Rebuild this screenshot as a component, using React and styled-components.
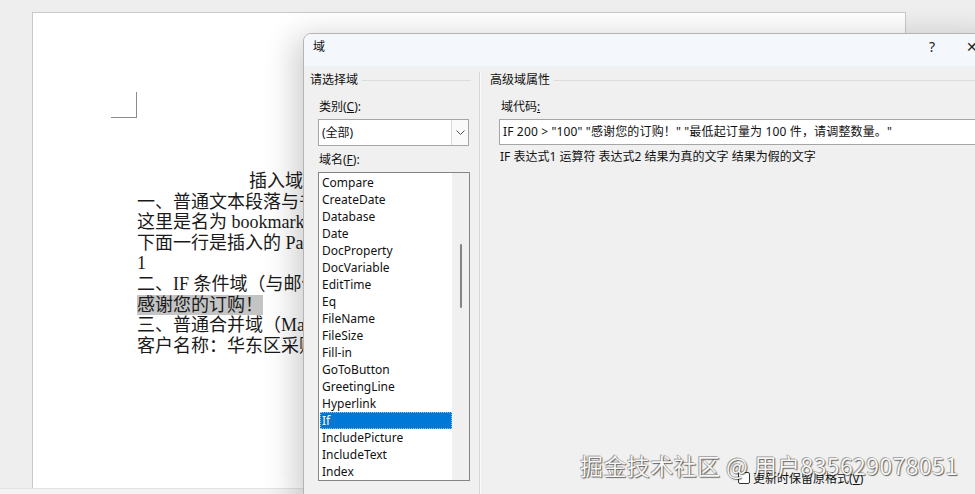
import React from 'react';
import styled, { createGlobalStyle } from 'styled-components';

const GlobalStyle = createGlobalStyle`
    html, body {
        margin: 0;
        padding: 0;
        background: #eeeeee;
        overflow: hidden;
    }
`

const fieldNames = [
    'Compare', 'CreateDate', 'Database', 'Date', 'DocProperty', 'DocVariable',
    'EditTime', 'Eq', 'FileName', 'FileSize', 'Fill-in', 'GoToButton',
    'GreetingLine', 'Hyperlink', 'If', 'IncludePicture', 'IncludeText', 'Index',
]

const docLines = [
    { text: '一、普通文本段落与书签域' },
    { text: '这里是名为 bookmark1 的书签内容。' },
    { text: '下面一行是插入的 Page 域：' },
    { text: '1' },
    { text: '二、IF 条件域（与邮件合并结合）：' },
    { text: '感谢您的订购！', marked: true },
    { text: '三、普通合并域（MailMerge）：' },
    { text: '客户名称：华东区采购部' },
]

const App = () => {
    return (
        <Screen>
            <GlobalStyle />
            <Workspace>
                <Page>
                    <CropMark />
                    <DocBody>
                        <DocTitle>插入域代码测试文档</DocTitle>
                        {docLines.map((line, i) => (
                            <DocLine key={i}>
                                {line.marked ? <Marked>{line.text}</Marked> : line.text}
                            </DocLine>
                        ))}
                    </DocBody>
                </Page>
            </Workspace>
            <StatusBar>
                <StatusItem>第 1 页，共 1 页</StatusItem>
                <StatusItem>136 个字</StatusItem>
                <StatusItem>中文(中国)</StatusItem>
                <StatusItem>辅助功能</StatusItem>
            </StatusBar>

            <Dialog>
                <TitleBar>
                    <TitleText>域</TitleText>
                    <TitleButton>?</TitleButton>
                    <TitleButton>✕</TitleButton>
                </TitleBar>
                <DialogBody>
                    <LeftPane>
                        <GroupHeader>
                            <span>请选择域</span>
                            <GroupLine />
                        </GroupHeader>
                        <PaneInner>
                            <FieldLabel>类别(<u>C</u>):</FieldLabel>
                            <Combo>
                                <ComboText>(全部)</ComboText>
                                <ComboButton>
                                    <svg width="9" height="5" viewBox="0 0 9 5">
                                        <path d="M0.5 0.5 L4.5 4.5 L8.5 0.5" fill="none" stroke="#555" strokeWidth="1" />
                                    </svg>
                                </ComboButton>
                            </Combo>
                            <FieldLabel $gap={6}>域名(<u>F</u>):</FieldLabel>
                            <ListBox>
                                <ListItems>
                                    {fieldNames.map(name => (
                                        <ListItem key={name} $selected={name === 'If'}>{name}</ListItem>
                                    ))}
                                </ListItems>
                                <ScrollTrack>
                                    <ScrollThumb />
                                </ScrollTrack>
                            </ListBox>
                        </PaneInner>
                    </LeftPane>
                    <Separator />
                    <RightPane>
                        <GroupHeader>
                            <span>高级域属性</span>
                            <GroupLine />
                        </GroupHeader>
                        <RightInner>
                            <FieldLabel>域代码<u>:</u></FieldLabel>
                            <CodeInput>IF 200 &gt; "100" "感谢您的订购！" "最低起订量为 100 件，请调整数量。"</CodeInput>
                            <HelpText>IF 表达式1 运算符 表达式2 结果为真的文字 结果为假的文字</HelpText>
                            <CheckRow>
                                <CheckBox />
                                <span>更新时保留原格式(<u>V</u>)</span>
                            </CheckRow>
                        </RightInner>
                    </RightPane>
                </DialogBody>
            </Dialog>

            <Watermark>掘金技术社区 @ 用户835629078051</Watermark>
        </Screen>
    )
}

const Screen = styled.div`
    position: relative;
    width: 975px;
    height: 494px;
    overflow: hidden;
    background: #eeeeee;
    display: flex;
    flex-direction: column;
`
const Workspace = styled.div`
    padding: 12px 0 0 32px;
    height: 476px;
`
const Page = styled.div`
    box-sizing: border-box;
    width: 874px;
    height: 477px;
    background: #ffffff;
    border: 1px solid #c9c9c9;
    border-bottom: none;
    padding: 79px 0 0 78px;
`
const CropMark = styled.div`
    width: 25px;
    height: 25px;
    border-right: 1px solid #8c8c8c;
    border-bottom: 1px solid #8c8c8c;
`
const DocBody = styled.div`
    margin: 53px 0 0 26px;
    font-family: "Liberation Serif", "Noto Sans CJK SC", serif;
    font-size: 18px;
    line-height: 20.6px;
    color: #1a1a1a;
    white-space: nowrap;
`
const DocTitle = styled.div`
    padding-left: 112px;
`
const DocLine = styled.div``
const Marked = styled.span`
    background: #c4c4c4;
`
const StatusBar = styled.div`
    height: 6px;
    overflow: hidden;
    background: #f3f3f3;
    border-top: 1px solid #e2e2e2;
    display: flex;
    gap: 40px;
    padding: 2px 0 0 15px;
    font-family: "Noto Sans CJK SC", sans-serif;
    font-size: 16px;
    font-weight: 700;
    line-height: 20px;
    color: #222;
`
const StatusItem = styled.span``

const Dialog = styled.div`
    position: absolute;
    left: 303px;
    top: 33px;
    width: 700px;
    height: 472px;
    box-sizing: border-box;
    background: #f0f0f0;
    border: 1px solid #b4b4b4;
    border-top-left-radius: 8px;
    box-shadow: -8px 4px 32px rgba(0, 0, 0, 0.2);
    display: flex;
    flex-direction: column;
    font-family: "Noto Sans", "Noto Sans CJK SC", sans-serif;
    font-size: 12px;
    color: #111;
    overflow: hidden;
`
const TitleBar = styled.div`
    height: 32px;
    display: flex;
    align-items: flex-start;
    background: #f4f7fc;
    padding-right: 10px;
`
const TitleText = styled.div`
    padding: 5px 0 0 9px;
    line-height: 16px;
    flex: 1;
`
const TitleButton = styled.div`
    width: 40px;
    padding-top: 4px;
    text-align: center;
    font-size: 14px;
    line-height: 18px;
    color: #222;
`
const DialogBody = styled.div`
    flex: 1;
    display: flex;
`
const LeftPane = styled.div`
    width: 175px;
    box-sizing: border-box;
    padding-left: 6px;
`
const GroupHeader = styled.div`
    display: flex;
    align-items: center;
    gap: 4px;
    height: 16px;
    margin-top: 6px;
    line-height: 16px;
    white-space: nowrap;
    padding-right: 8px;
`
const GroupLine = styled.div`
    flex: 1;
    height: 1px;
    background: #dcdcdc;
`
const PaneInner = styled.div`
    padding-left: 8px;
    width: 152px;
`
const FieldLabel = styled.div`
    margin-top: ${props => props.$gap || 11}px;
    margin-bottom: 4px;
    padding-left: 1px;
    height: 16px;
    line-height: 16px;
    white-space: nowrap;
`
const Combo = styled.div`
    box-sizing: border-box;
    width: 151px;
    height: 27px;
    display: flex;
    background: #fff;
    border: 1px solid #a5a5a5;
`
const ComboText = styled.div`
    flex: 1;
    padding-left: 3px;
    line-height: 25px;
`
const ComboButton = styled.div`
    width: 16px;
    border-left: 1px solid #dadada;
    background: #fafafa;
    display: flex;
    align-items: center;
    justify-content: center;
`
const ListBox = styled.div`
    box-sizing: border-box;
    width: 152px;
    height: 309px;
    display: flex;
    background: #fff;
    border: 1px solid #858585;
    overflow: hidden;
`
const ListItems = styled.div`
    flex: 1;
    padding: 1px 0 0 1px;
`
const ListItem = styled.div`
    box-sizing: border-box;
    height: 17px;
    line-height: 16px;
    padding-left: 1px;
    color: ${props => props.$selected ? '#fff' : '#111'};
    background: ${props => props.$selected ? '#0078d7' : 'transparent'};
    border: 1px dotted ${props => props.$selected ? '#9cc7ee' : 'transparent'};
`
const ScrollTrack = styled.div`
    width: 17px;
    background: #f0f0f0;
    display: flex;
    justify-content: center;
    padding-top: 71px;
    box-sizing: border-box;
`
const ScrollThumb = styled.div`
    width: 2px;
    height: 64px;
    background: #858585;
    border-radius: 1px;
`
const Separator = styled.div`
    width: 1px;
    margin-top: 6px;
    background: #d6d6d6;
    border-right: 1px solid #fbfbfb;
`
const RightPane = styled.div`
    flex: 1;
    padding-left: 9px;
    display: flex;
    flex-direction: column;
`
const RightInner = styled.div`
    flex: 1;
    padding-left: 10px;
    padding-right: 8px;
    display: flex;
    flex-direction: column;
    padding-bottom: 19px;
`
const CodeInput = styled.div`
    box-sizing: border-box;
    height: 26px;
    margin-left: -1px;
    background: #fff;
    border: 1px solid #a5a5a5;
    padding-left: 3px;
    line-height: 24px;
    letter-spacing: 0.15px;
    white-space: nowrap;
`
const HelpText = styled.div`
    margin-top: 4px;
    height: 16px;
    line-height: 16px;
    white-space: nowrap;
`
const CheckRow = styled.div`
    margin-top: auto;
    margin-left: 238px;
    display: flex;
    align-items: center;
    gap: 3px;
    height: 14px;
    white-space: nowrap;
`
const CheckBox = styled.div`
    width: 10px;
    height: 10px;
    border: 1px solid #333;
    border-radius: 2px;
    background: #fff;
`
const Watermark = styled.div`
    position: absolute;
    left: 580px;
    top: 449px;
    font-family: "Noto Sans CJK SC", sans-serif;
    font-size: 23px;
    letter-spacing: 0.4px;
    line-height: 32px;
    white-space: nowrap;
    color: #f7f7f7;
    text-shadow: 1px 1px 1px rgba(0, 0, 0, 0.55), -1px -1px 0 rgba(0, 0, 0, 0.25), 0 0 1px rgba(0, 0, 0, 0.5);
    pointer-events: none;
`

export default App
